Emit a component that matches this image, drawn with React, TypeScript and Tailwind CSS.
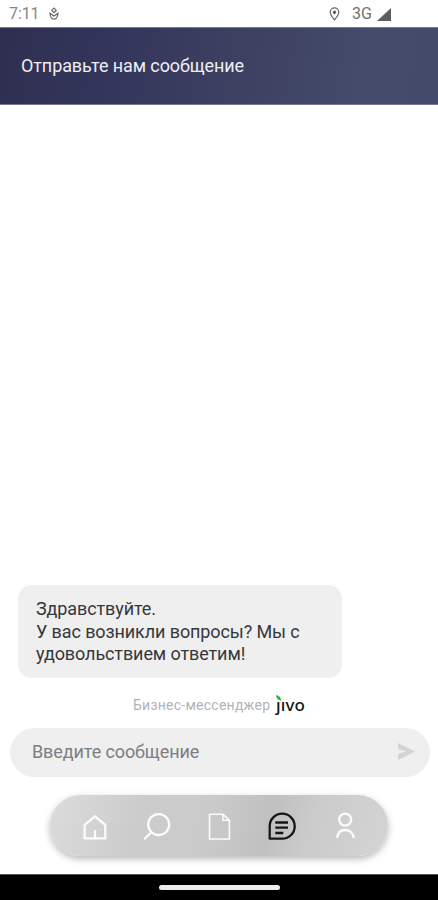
import type { ReactNode } from "react";

function StatusBar() {
  return (
    <div className="flex h-[27px] shrink-0 items-center pl-[9px] pt-[1px] text-[#858585]">
      <span className="w-[31px] text-[16px] leading-none tracking-[-0.1px]">7:11</span>
      <svg className="ml-[9px] h-[14px] w-[10px]" viewBox="0 0 10 14" fill="none" stroke="#666" strokeWidth="1.2">
        <path d="M5 1.2 7.2 3.4 5 5.6 2.8 3.4Z" />
        <path d="M1 6.3C1.4 10.4 3.3 12.2 5 12.2s3.6-1.8 4-5.9L5 9Z" />
      </svg>
      <svg className="ml-[270px] h-[14px] w-[11px]" viewBox="0 0 11 14" fill="none" stroke="#666" strokeWidth="1.2">
        <path d="M5.5 13C3.8 10.7 1.2 8 1.2 5.2a4.3 4.3 0 0 1 8.6 0C9.8 8 7.2 10.7 5.5 13Z" />
        <circle cx="5.5" cy="5.2" r="1.1" fill="#333" />
      </svg>
      <span className="ml-[12px] w-[21px] text-[16px] leading-none tracking-[-0.1px] text-[#707070]">3G</span>
      <svg className="ml-[4px] h-[13px] w-[14px]" viewBox="0 0 14 13">
        <path d="M14 0v13H0Z" fill="#5e5e5e" />
      </svg>
    </div>
  );
}

function NavItem({ children, active = false }: { children: ReactNode; active?: boolean }) {
  return (
    <button className="flex flex-1 justify-center">
      <svg
        className={active ? "h-10 w-10 text-[#161616]" : "h-10 w-10 text-[#fbfbfb]"}
        viewBox="0 0 40 40"
        fill="none"
        stroke="currentColor"
        strokeWidth="2.3"
        strokeLinejoin="round"
      >
        {children}
      </svg>
    </button>
  );
}

function BottomNav() {
  return (
    <nav className="mx-[50px] mt-[18px] flex h-[61px] shrink-0 items-center rounded-full bg-[linear-gradient(105deg,#dcdcdc_0%,#cccccc_26%,#cbcbcb_44%,#c5c5c5_56%,#c0c0c0_64%,#cbcbcb_76%,#d4d4d4_100%)] pl-[14px] pr-3 shadow-[0_3px_7px_rgba(0,0,0,0.28)]">
      <NavItem>
        <path d="M9.6 19 20 10.3 30.3 19v13.4H9.6ZM20 24v8" />
      </NavItem>
      <NavItem>
        <circle cx="20.7" cy="18.6" r="10.5" />
        <path d="m13.3 26.2-7.1 7" />
      </NavItem>
      <NavItem>
        <path d="M9.5 8.2h13.3l6.6 6V33H9.5ZM22.8 8.2v6h6.6" strokeWidth="1.6" />
      </NavItem>
      <NavItem active>
        <path d="M7.7 32.7V20.3a12.5 12.5 0 1 1 12.5 12.4Z" />
        <path d="M13.3 16.5H26M13.3 21.7H26M13.3 27h8" />
      </NavItem>
      <NavItem>
        <circle cx="20.2" cy="13.6" r="6" />
        <path d="M12.2 32c.5-5.3 3.8-8 8.1-8s7.9 2.7 8.5 8" />
      </NavItem>
    </nav>
  );
}

export default function App() {
  return (
    <div className="flex h-[900px] w-[438px] flex-col overflow-hidden bg-white font-['Roboto',sans-serif]">
      <StatusBar />
      <header className="flex h-[78px] shrink-0 items-center border-y border-[#77788c] bg-[linear-gradient(100deg,#2f3050_0%,#32345a_22%,#3e4262_58%,#444b6b_82%,#444a6a_100%)] pl-[21px]">
        <h1 className="whitespace-nowrap text-[18px] leading-6 tracking-[-0.1px] text-[#eeeef3]">Отправьте нам сообщение</h1>
      </header>

      <main className="flex min-h-0 flex-1 flex-col justify-end">
        <div className="ml-[18px] h-[93px] w-[324px] rounded-[14px] bg-[#efefef] pl-[18px] pt-[13px] text-[18px] leading-[22.5px] tracking-[-0.1px] text-[#36373b]">
          <p>Здравствуйте.</p>
          <p className="whitespace-nowrap">У вас возникли вопросы? Мы с</p>
          <p>удовольствием ответим!</p>
        </div>
        <div className="mt-[14px] flex h-[26px] items-center pl-[133px]">
          <span className="w-[143px] whitespace-nowrap text-[14px] tracking-[0.25px] text-[#b0b4b8]">Бизнес-мессенджер</span>
          <span className="relative -top-px whitespace-nowrap font-['Noto_Sans',sans-serif] text-[17px] font-medium leading-none tracking-[0.1px] text-[#161616]">
            ȷıvo
            <svg className="absolute -top-[1px] left-0 h-[6px] w-[6px]" viewBox="0 0 6 6">
              <path d="M0 0c3 .5 5 2.5 5 5.5C2 5.3.2 3 0 0Z" fill="#20b624" />
            </svg>
          </span>
        </div>
        <div className="ml-[10px] mr-[8px] mt-[10px] flex h-[49px] shrink-0 items-center justify-between rounded-full bg-[#efefef] pl-[22px] pr-[15px]">
          <span className="relative -top-px text-[18px] tracking-[-0.1px] text-[#7b7e83]">Введите сообщение</span>
          <svg className="relative -top-px h-[17px] w-[17px]" viewBox="0 0 17 17">
            <path d="M0 0 17 8.5 0 17v-6l8-2.5L0 6Z" fill="#d3d3d3" />
          </svg>
        </div>
      </main>

      <BottomNav />
      <footer className="mt-[18px] flex h-[26px] shrink-0 items-center justify-center border-t border-[#555] bg-black">
        <div className="h-[5px] w-[121px] rounded-full bg-[#ededed]" />
      </footer>
    </div>
  );
}
